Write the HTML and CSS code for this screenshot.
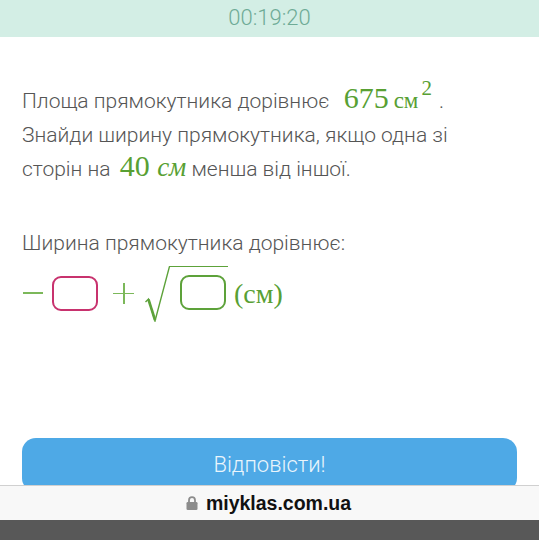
FILE: index.html
```html
<!DOCTYPE html>
<html lang="uk">
<head>
<meta charset="utf-8">
<link rel="stylesheet" href="styles.css">
</head>
<body>
<div class="timer">00:19:20</div>
<main class="content">
  <p class="question">Площа прямокутника дорівнює <span class="m m-area">675<span class="unit">см</span><span class="sup">2</span></span> .<br>Знайди ширину прямокутника, якщо одна зі<br>сторін на <span class="m m-len">40 <span class="it">см</span></span> менша від іншої.</p>
  <p class="prompt">Ширина прямокутника дорівнює:</p>
  <div class="formula">
    <span class="minus"></span>
    <span class="box pink"></span>
    <span class="plus"><span class="ph"></span><span class="pv"></span></span>
    <span class="sqrt">
      <svg class="radical" width="25" height="58" viewBox="0 0 25 58">
        <path d="M0.5 38 L3.5 35 L10 57 L24.5 2.5" fill="none" stroke="#5da23a" stroke-width="1.4" stroke-linejoin="miter"/>
        <path d="M3.5 35.5 L10 56" fill="none" stroke="#5da23a" stroke-width="2.6"/>
      </svg>
      <span class="rad-body"><span class="box green"></span></span>
    </span>
    <span class="units">(см)</span>
  </div>
  <button class="submit">Відповісти!</button>
</main>
<div class="urlbar">
  <svg class="lock" width="12" height="14" viewBox="0 0 12 14">
    <path d="M3 6.5 V4.2 A3 3 0 0 1 9 4.2 V6.5" fill="none" stroke="#8c8c8c" stroke-width="1.8"/>
    <rect x="0.5" y="6" width="11" height="8" rx="1.3" fill="#8c8c8c"/>
  </svg>
  <span class="url">miyklas.com.ua</span>
</div>
<div class="homebar"></div>
</body>
</html>
```
FILE: styles.css
```css
html, body {
  margin: 0;
  padding: 0;
  background: #ffffff;
}
body {
  width: 539px;
  height: 540px;
  overflow: hidden;
  font-family: Roboto, "Liberation Sans", sans-serif;
  font-weight: 300;
  color: #555555;
}
.timer {
  height: 37px;
  background: #d3eee5;
  color: #6eab96;
  font-size: 22px;
  display: flex;
  align-items: center;
  justify-content: center;
  padding-bottom: 3px;
  box-sizing: border-box;
}
.content {
  padding: 0 22px;
}
.question {
  margin: 47px 0 0;
  font-size: 21px;
  line-height: 34px;
}
.m {
  font-family: "Liberation Serif", serif;
  font-weight: 400;
  color: #58a033;
  font-size: 30px;
  line-height: 0;
}
.m-area {
  margin-left: 9px;
}
.m-len {
  margin-left: 4px;
}
.unit {
  font-size: 23px;
  margin-left: 5px;
}
.sup {
  font-size: 21px;
  vertical-align: 13px;
  margin-left: 3px;
  margin-right: 2px;
}
.it {
  font-style: italic;
  font-size: 27px;
}
.prompt {
  margin: 40px 0 0;
  font-size: 21px;
  line-height: 34px;
}
.formula {
  display: flex;
  align-items: center;
  height: 58px;
  margin-top: 4px;
}
.minus {
  width: 20px;
  height: 1.5px;
  background: #7cb85a;
  margin-left: 1px;
}
.box {
  display: block;
  width: 46px;
  height: 35px;
  box-sizing: border-box;
  border-radius: 9px;
  border: 2.6px solid;
}
.box.pink {
  border-color: #c8326e;
  margin-left: 9px;
}
.box.green {
  border-color: #5da23a;
}
.plus {
  position: relative;
  width: 21px;
  height: 21px;
  margin-left: 15px;
}
.ph {
  position: absolute;
  left: 0;
  right: 0;
  top: 10px;
  height: 1.5px;
  background: #7cb85a;
}
.pv {
  position: absolute;
  top: 0;
  bottom: 0;
  left: 10px;
  width: 1.5px;
  background: #7cb85a;
}
.sqrt {
  display: flex;
  align-items: flex-start;
  margin-left: 11px;
  height: 58px;
}
.radical {
  display: block;
}
.rad-body {
  display: block;
  margin-top: 2px;
  border-top: 1.4px solid #5da23a;
  padding: 8px 2px 0 11px;
  margin-left: -1px;
}
.units {
  font-family: "Liberation Serif", serif;
  font-weight: 400;
  color: #58a033;
  font-size: 28px;
  margin-left: 6px;
  margin-top: 2px;
}
.submit {
  display: block;
  width: 100%;
  height: 54px;
  margin-top: 116px;
  border: none;
  border-radius: 14px;
  background: #4ea9e6;
  color: #eaf5fc;
  font-family: Roboto, "Liberation Sans", sans-serif;
  font-weight: 300;
  font-size: 22px;
  padding: 0 0 2px;
}
.urlbar {
  position: fixed;
  left: 0;
  right: 0;
  top: 485px;
  height: 35px;
  box-sizing: border-box;
  border-top: 1px solid #d0d0d0;
  background: #f8f8f8;
  display: flex;
  align-items: center;
  justify-content: center;
  gap: 8px;
  padding-right: 2px;
}
.lock {
  display: block;
  margin-top: -1px;
}
.url {
  font-family: "Liberation Sans", Arial, sans-serif;
  font-weight: 700;
  font-size: 19.5px;
  color: #111111;
}
.homebar {
  position: fixed;
  left: 0;
  right: 0;
  top: 520px;
  height: 20px;
  background: #585858;
}
```
